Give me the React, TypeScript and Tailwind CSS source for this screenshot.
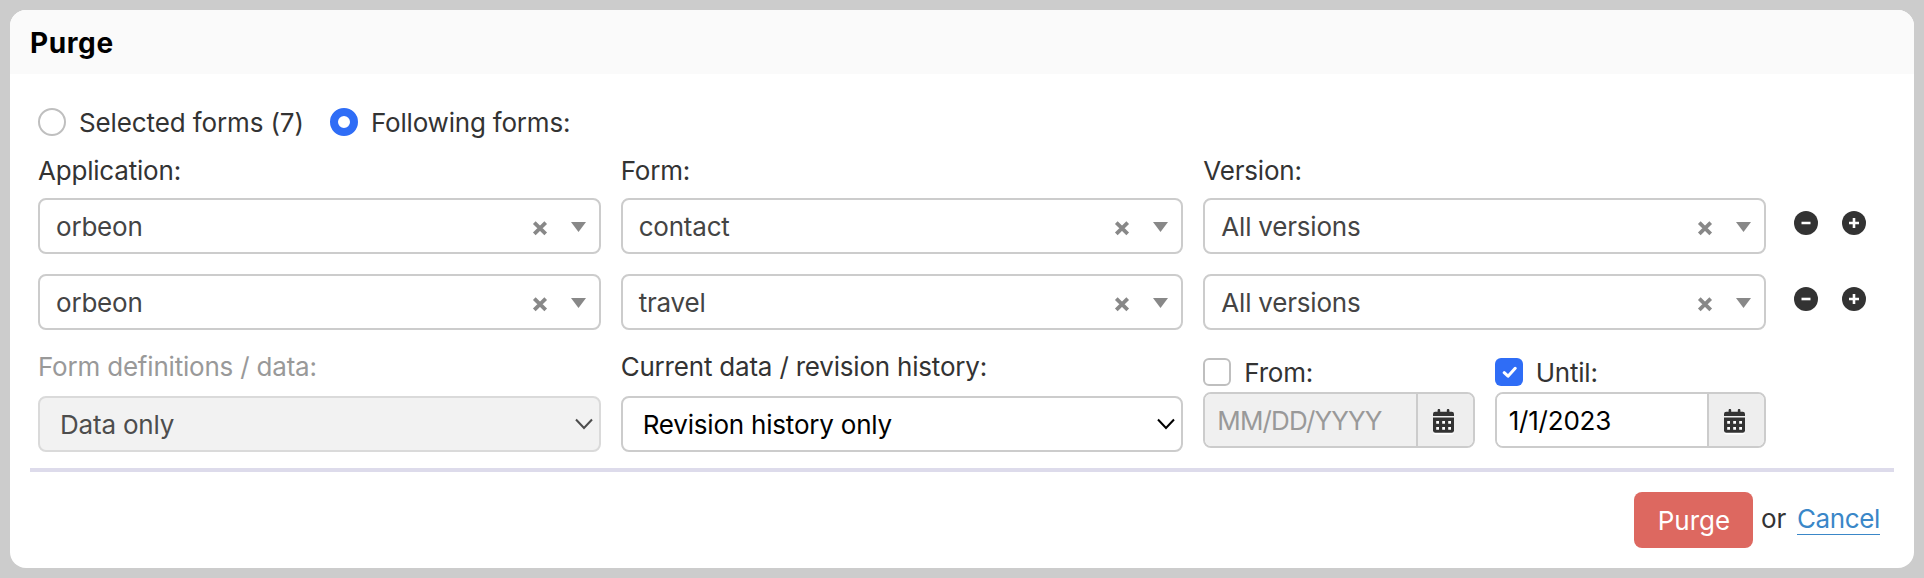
import React from "react";

function Clear() {
  return (
    <svg className="block h-4 w-4 shrink-0" viewBox="0 0 16 16">
      <path d="M2.300 2.600L13.700 13.800M13.700 2.600L2.300 13.800" stroke="#888" strokeWidth="3.800" fill="none" />
    </svg>
  );
}

function Combo({ value }: { value: string }) {
  return (
    <div className="flex h-14 min-w-0 items-center rounded-lg border-2 border-[#ccc] bg-white pr-[13px] pl-4 text-[#444]">
      <span className="flex-1 pt-px leading-[53px]">{value}</span>
      <div className="mt-1">
        <Clear />
      </div>
      <svg className="mt-[2px] ml-[23px] block h-[10px] w-[15px]" viewBox="0 0 15 10">
        <path d="M0 0H15L7.500 10Z" fill="#888" />
      </svg>
    </div>
  );
}

function NativeSelect({ value, disabled }: { value: string; disabled?: boolean }) {
  return (
    <div
      className={
        "flex h-14 items-center rounded-lg border-2 pr-[6px] pl-5 " +
        (disabled ? "border-[#dadada] bg-[#f2f2f2] text-[#4d4d4d]" : "border-[#ccc] bg-white text-black")
      }
    >
      <span className="flex-1 pt-px leading-[53px]">{value}</span>
      <svg className="block h-3 w-[18px]" viewBox="0 0 18 12">
        <path d="M1 1.500L9 10L17 1.500" stroke="currentColor" strokeWidth="2" fill="none" />
      </svg>
    </div>
  );
}

function RoundButton({ plus }: { plus?: boolean }) {
  return (
    <svg className="block h-6 w-6" viewBox="0 0 24 24">
      <circle cx="12" cy="12" r="12" fill="#333" />
      <path d={plus ? "M7 12H17M12 7V17" : "M7.500 12H16.500"} stroke="#fff" strokeWidth="2.600" />
    </svg>
  );
}

function Calendar() {
  return (
    <svg className="block h-[26px] w-[21px]" viewBox="0 0 21 26">
      <path d="M0 22.300A2.500 2.500 0 0 0 2.500 25.500H18.500A2.500 2.500 0 0 0 21 22.300Z" fill="#fff" />
      <path
        d="M4.600 1.200a1.200 1.200 0 0 1 2.600 0V2.800H13.800V1.200a1.200 1.200 0 0 1 2.600 0V2.800H18.700A2.300 2.300 0 0 1 21 5.100V7.300H0V5.100A2.300 2.300 0 0 1 2.300 2.800H4.600Z"
        fill="#333"
      />
      <path d="M0 7.300H21V8.500H0Z" fill="#fff" />
      <path d="M0 8.500H21V21.500A2.300 2.300 0 0 1 18.700 23.800H2.300A2.300 2.300 0 0 1 0 21.500Z" fill="#333" />
      <path
        d="M3.200 12h2.800v2.800h-2.800zM9.200 12h2.800v2.800h-2.800zM15.200 12h2.800v2.800h-2.800zM3.200 18h2.800v2.800h-2.800zM9.200 18h2.800v2.800h-2.800zM15.200 18h2.800v2.800h-2.800z"
        fill="#fff"
      />
    </svg>
  );
}

function DateField({ label, text, on }: { label: string; text: string; on?: boolean }) {
  return (
    <div>
      <div className="flex h-7 items-center">
        {on ? (
          <span className="flex h-7 w-7 items-center justify-center rounded-[6px] bg-[#2f6df6]">
            <svg className="block h-4 w-4" viewBox="0 0 16 16">
              <path d="M3.200 8.700L7 12.200L14.200 4.300" stroke="#fff" strokeWidth="3" strokeLinecap="round" strokeLinejoin="round" fill="none" />
            </svg>
          </span>
        ) : (
          <span className="h-7 w-7 rounded-[6px] border-2 border-[#bfbfbf] bg-white" />
        )}
        <span className="mt-[2px] ml-[13px] leading-7">{label}</span>
      </div>
      <div className="mt-[6px] flex h-14 overflow-hidden rounded-lg border-2 border-[#ccc]">
        <div
          className={
            "flex-1 pl-3 leading-[54px] " +
            (on ? "bg-white text-black" : "bg-[#f0f0f0] tracking-[-0.85px] text-[#999]")
          }
        >
          {text}
        </div>
        <div className="flex w-[57px] items-center justify-center border-l-2 border-[#ccc] bg-[#eee] pt-1 pr-1">
          <Calendar />
        </div>
      </div>
    </div>
  );
}

const rows = [
  ["orbeon", "contact", "All versions"],
  ["orbeon", "travel", "All versions"],
];

export default function App() {
  return (
    <div className="h-[578px] w-[1924px] bg-[#ccc] p-[10px] font-['Inter','Liberation_Sans',sans-serif] text-[26px] tracking-[-0.2px] text-[#333]">
      <div className="flex h-[558px] flex-col overflow-hidden rounded-2xl bg-white">
        <h1 className="h-16 bg-[#fafafa] pl-5 text-[28px] leading-[66px] font-bold tracking-[0.6px] text-black">Purge</h1>
        <div className="px-7 pt-[34px]">
          <div className="flex h-7 items-center">
            <span className="h-7 w-7 rounded-full border-2 border-[#bfbfbf]" />
            <span className="mt-[2px] ml-[13px] w-[251px] leading-7 tracking-[-0.12px]">Selected forms (7)</span>
            <span className="h-7 w-7 rounded-full border-8 border-[#2f6df6]" />
            <span className="mt-[2px] ml-[13px] leading-7">Following forms:</span>
          </div>
          <div className="mt-[18px] grid h-[44px] w-[1728px] grid-cols-3 gap-5 leading-[34px]">
            <span>Application:</span>
            <span>Form:</span>
            <span>Version:</span>
          </div>
          {rows.map((row, i) => (
            <div key={i} className="mb-5 flex">
              <div className="grid w-[1728px] grid-cols-3 gap-5">
                {row.map((v, j) => (
                  <Combo key={j} value={v} />
                ))}
              </div>
              <div className="mt-[13px] ml-7 flex gap-6">
                <RoundButton />
                <RoundButton plus />
              </div>
            </div>
          ))}
          <div className="grid w-[1728px] grid-cols-3 gap-5">
            <div>
              <div className="h-[46px] leading-[34px] text-[#999]">Form definitions / data:</div>
              <NativeSelect value="Data only" disabled />
            </div>
            <div>
              <div className="h-[46px] leading-[34px]">Current data / revision history:</div>
              <NativeSelect value="Revision history only" />
            </div>
            <div className="grid grid-cols-2 gap-5 pt-2">
              <DateField label="From:" text="MM/DD/YYYY" />
              <DateField label="Until:" text="1/1/2023" on />
            </div>
          </div>
        </div>
        <div className="mx-5 mt-4 h-1 shrink-0 bg-[#dddbeb]" />
        <div className="mt-5 flex justify-end pr-[34px]">
          <button className="h-14 w-[119px] rounded-lg bg-[#dd6860] pl-px text-center leading-[57px] tracking-normal text-white">Purge</button>
          <span className="ml-2 w-9 leading-[53px]">or</span>
          <a className="h-[43px] w-[83px] border-b border-[#3a87c8] leading-[54px] tracking-[-0.4px] whitespace-nowrap text-[#3a87c8]">Cancel</a>
        </div>
      </div>
    </div>
  );
}
